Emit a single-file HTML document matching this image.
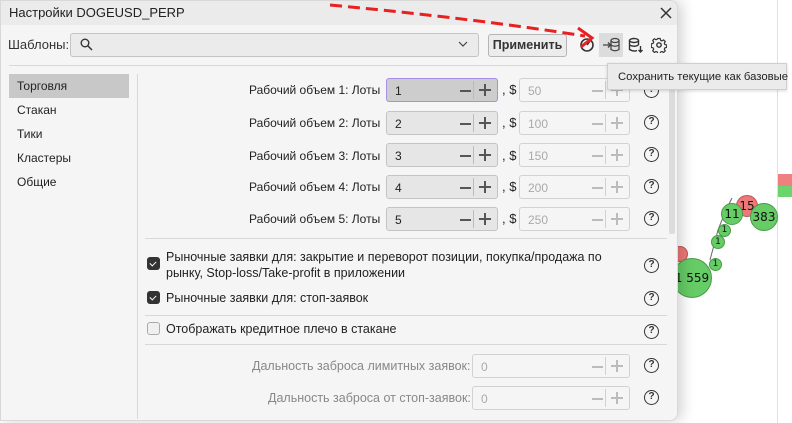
<!DOCTYPE html>
<html><head><meta charset="utf-8"><style>
*{box-sizing:border-box;margin:0;padding:0}
body{width:792px;height:423px;overflow:hidden;background:#fff;font-family:"Liberation Sans",Arial,sans-serif;font-size:12px;color:#222;position:relative}
.a{position:absolute}
#dlg{left:0;top:0;width:678px;height:421px;background:#f5f5f5;border:1px solid #d8d8d8;border-radius:0 8px 8px 0;box-shadow:4px 0 14px rgba(0,0,0,.18);overflow:hidden}
.title{left:0;top:0;width:678px;height:24px;background:#ebebeb}
.lbl{white-space:nowrap;line-height:14px}
.inp{border:1px solid #c4c4c4;border-radius:3px;height:24px;background:#e6e6e6}
.inp.dis{background:#f5f5f5;border-color:#d2d2d2;color:#aaa}
.inp .v{position:absolute;left:8px;top:5px;font-size:12px}
.inp .mi{position:absolute;right:26px;top:11px;width:11px;height:1.5px;background:#555}
.inp .sep{position:absolute;right:23px;top:2px;width:1px;height:18px;background:#bbb}
.inp .pl{position:absolute;right:6px;top:5px;width:12px;height:12px}
.inp .pl:before{content:"";position:absolute;left:0;top:5px;width:12px;height:1.5px;background:#555}
.inp .pl:after{content:"";position:absolute;left:5.25px;top:0;width:1.5px;height:12px;background:#555}
.dis .mi,.dis .pl:before,.dis .pl:after{background:#bbb}
.dis .sep{background:#d0d0d0}
.q{width:15px;height:15px;border:1.5px solid #333;border-radius:50%;font-size:10px;font-weight:bold;text-align:center;line-height:12px;color:#333}
.hr{height:1px;background:#d8d8d8}
.cb{width:13px;height:13px;border-radius:3px;background:#333}
.cb:after{content:"";position:absolute;left:4px;top:2.5px;width:3px;height:5px;border:solid #fff;border-width:0 1.3px 1.3px 0;transform:rotate(45deg)}
.b{border-radius:50%;border:1px solid #4a9a4a;background:#66cc66;text-align:center;font-family:"DejaVu Sans",sans-serif;color:#111}
.r{background:#ee7777;border-color:#b55}
.lot{font-size:12px}
</style></head><body>
<div class="a" style="left:777px;top:0;width:1px;height:423px;background:#e0e0e0"></div>
<div class="a" style="left:778px;top:174px;width:14px;height:12px;background:#f08080"></div>
<div class="a" style="left:778px;top:186px;width:14px;height:11px;background:#6cd46c"></div>
<svg class="a" style="left:670px;top:190px" width="110" height="110"><path d="M40 70 L48 40 L56 20 L62 8" stroke="#666" fill="none"/></svg>
<div class="a b r" style="left:672px;top:246px;width:16px;height:16px"></div>
<div class="a b r" style="left:736px;top:195px;width:22px;height:22px;font-size:12px;line-height:20px">15</div>
<div class="a b" style="left:721px;top:203px;width:22px;height:22px;font-size:12px;line-height:20px">11</div>
<div class="a b" style="left:750px;top:203px;width:28px;height:28px;font-size:12px;line-height:26px">383</div>
<div class="a b" style="left:718px;top:224px;width:13px;height:13px;font-size:9px;line-height:11px">1</div>
<div class="a b" style="left:711px;top:235px;width:14px;height:14px;font-size:9px;line-height:12px">1</div>
<div class="a b" style="left:709px;top:258px;width:13px;height:13px;font-size:9px;line-height:11px">1</div>
<div class="a b" style="left:672px;top:258px;width:40px;height:40px;font-size:12px;line-height:38px">1 559</div>

<div id="dlg" class="a">
<div class="a title"></div>
<div class="a lbl" style="left:8px;top:5px;font-size:13px;color:#222">Настройки DOGEUSD_PERP</div>
<svg class="a" style="left:659px;top:6px" width="12" height="12"><path d="M1 1L11 11M11 1L1 11" stroke="#333" stroke-width="1.5"/></svg>
<div class="a lbl" style="left:7px;top:37px;font-size:13px;color:#333">Шаблоны:</div>
<div class="a inp" style="left:69px;top:32px;width:409px;height:24px;background:#ebebeb"></div>
<svg class="a" style="left:79px;top:37px" width="13" height="13"><circle cx="5" cy="5" r="3.8" stroke="#333" stroke-width="1.4" fill="none"/><path d="M8 8L12 12" stroke="#333" stroke-width="1.5"/></svg>
<svg class="a" style="left:457px;top:40px" width="10" height="7"><path d="M1 1L5 5L9 1" stroke="#444" fill="none" stroke-width="1.2"/></svg>
<div class="a" style="left:487px;top:33px;width:79px;height:23px;border:1px solid #b5b5b5;border-radius:3px;background:#ececec;text-align:center;line-height:21px;font-size:12.5px;font-weight:bold;color:#333">Применить</div>
<svg class="a" style="left:578px;top:36px" width="16" height="16"><circle cx="8" cy="8" r="6" stroke="#333" stroke-width="1.6" fill="none"/><path d="M8 8L11 4" stroke="#333" stroke-width="1.6"/></svg>
<div class="a" style="left:598px;top:32px;width:24px;height:24px;background:#dcdcdc"></div>
<svg class="a" style="left:601px;top:36px" width="18" height="16"><path d="M1 8H8M6 5.5L8.5 8L6 10.5" stroke="#444" fill="none" stroke-width="1.3"/><ellipse cx="13" cy="3.5" rx="4" ry="2" stroke="#444" fill="none" stroke-width="1.3"/><path d="M9 3.5V12.5Q13 15 17 12.5V3.5M9 8Q13 10.5 17 8" stroke="#444" fill="none" stroke-width="1.3"/></svg>
<svg class="a" style="left:627px;top:36px" width="16" height="16"><ellipse cx="6" cy="3.5" rx="4.5" ry="2" stroke="#333" fill="none" stroke-width="1.4"/><path d="M1.5 3.5V12.5Q6 15 9 13.5M10.5 3.5V8M1.5 8Q6 10.5 10.5 8M12.5 9V15M10.5 13L12.5 15L14.5 13" stroke="#333" fill="none" stroke-width="1.4"/></svg>
<svg class="a" style="left:650px;top:36px" width="16" height="16"><circle cx="8" cy="8" r="2.2" stroke="#333" fill="none" stroke-width="1.4"/><path d="M6.8 1.5h2.4l.4 1.8 1.4.6 1.6-1 1.7 1.7-1 1.6.6 1.4 1.8.4v2.4l-1.8.4-.6 1.4 1 1.6-1.7 1.7-1.6-1-1.4.6-.4 1.8H6.8l-.4-1.8-1.4-.6-1.6 1-1.7-1.7 1-1.6-.6-1.4-1.8-.4V6.8l1.8-.4.6-1.4-1-1.6 1.7-1.7 1.6 1 1.4-.6z" stroke="#333" fill="none" stroke-width="1.2" stroke-linejoin="round"/></svg>
<div class="a hr" style="left:8px;top:64px;width:662px"></div>

<div class="a" style="left:8px;top:73px;width:120px;height:24px;background:#c8c8c8"></div>
<div class="a lbl" style="left:16px;top:78px">Торговля</div>
<div class="a lbl" style="left:16px;top:102px">Стакан</div>
<div class="a lbl" style="left:16px;top:126px">Тики</div>
<div class="a lbl" style="left:16px;top:150px">Кластеры</div>
<div class="a lbl" style="left:16px;top:174px">Общие</div>
<div class="a" style="left:136px;top:73px;width:1px;height:345px;background:#d8d8d8"></div>
<div class="a" style="left:668px;top:73px;width:6px;height:160px;background:#dcdcdc;border-radius:2px"></div>

<div class="a lbl lot" style="left:248px;top:82px">Рабочий объем 1: Лоты</div>
<div class="a inp" style="left:385px;top:77px;width:112px;border-color:#a98ee6;background:#cdcdcd"><span class="v">1</span><i class="mi"></i><i class="sep"></i><i class="pl"></i></div>
<div class="a lbl" style="left:501px;top:82px;font-size:13px">, $</div>
<div class="a inp dis" style="left:518px;top:77px;width:111px"><span class="v">50</span><i class="mi"></i><i class="sep"></i><i class="pl"></i></div>
<div class="a q" style="left:643px;top:82px">?</div>

<div class="a lbl lot" style="left:248px;top:115px">Рабочий объем 2: Лоты</div>
<div class="a inp" style="left:385px;top:110px;width:112px"><span class="v">2</span><i class="mi"></i><i class="sep"></i><i class="pl"></i></div>
<div class="a lbl" style="left:501px;top:115px;font-size:13px">, $</div>
<div class="a inp dis" style="left:518px;top:110px;width:111px"><span class="v">100</span><i class="mi"></i><i class="sep"></i><i class="pl"></i></div>
<div class="a q" style="left:643px;top:114px">?</div>

<div class="a lbl lot" style="left:248px;top:148px">Рабочий объем 3: Лоты</div>
<div class="a inp" style="left:385px;top:142px;width:112px"><span class="v">3</span><i class="mi"></i><i class="sep"></i><i class="pl"></i></div>
<div class="a lbl" style="left:501px;top:148px;font-size:13px">, $</div>
<div class="a inp dis" style="left:518px;top:142px;width:111px"><span class="v">150</span><i class="mi"></i><i class="sep"></i><i class="pl"></i></div>
<div class="a q" style="left:643px;top:146px">?</div>

<div class="a lbl lot" style="left:248px;top:179px">Рабочий объем 4: Лоты</div>
<div class="a inp" style="left:385px;top:174px;width:112px"><span class="v">4</span><i class="mi"></i><i class="sep"></i><i class="pl"></i></div>
<div class="a lbl" style="left:501px;top:179px;font-size:13px">, $</div>
<div class="a inp dis" style="left:518px;top:174px;width:111px"><span class="v">200</span><i class="mi"></i><i class="sep"></i><i class="pl"></i></div>
<div class="a q" style="left:643px;top:178px">?</div>

<div class="a lbl lot" style="left:248px;top:211px">Рабочий объем 5: Лоты</div>
<div class="a inp" style="left:385px;top:206px;width:112px"><span class="v">5</span><i class="mi"></i><i class="sep"></i><i class="pl"></i></div>
<div class="a lbl" style="left:501px;top:211px;font-size:13px">, $</div>
<div class="a inp dis" style="left:518px;top:206px;width:111px"><span class="v">250</span><i class="mi"></i><i class="sep"></i><i class="pl"></i></div>
<div class="a q" style="left:643px;top:210px">?</div>

<div class="a hr" style="left:144px;top:237px;width:522px"></div>
<div class="a cb" style="left:146px;top:256px"></div>
<div class="a lbl" style="left:165px;top:248px;font-size:12.5px;line-height:16px">Рыночные заявки для: закрытие и переворот позиции, покупка/продажа по<br>рынку, Stop-loss/Take-profit в приложении</div>
<div class="a q" style="left:643px;top:257px">?</div>
<div class="a cb" style="left:146px;top:290px"></div>
<div class="a lbl" style="left:165px;top:290px;font-size:12.5px">Рыночные заявки для: стоп-заявок</div>
<div class="a q" style="left:643px;top:290px">?</div>
<div class="a hr" style="left:144px;top:314px;width:522px"></div>
<div class="a" style="left:146px;top:321px;width:13px;height:13px;border:1px solid #aaa;border-radius:3px;background:#f0f0f0"></div>
<div class="a lbl" style="left:165px;top:321px;font-size:12.5px">Отображать кредитное плечо в стакане</div>
<div class="a q" style="left:643px;top:323px">?</div>
<div class="a hr" style="left:144px;top:343px;width:522px"></div>
<div class="a lbl" style="left:251px;top:358px;font-size:12.5px;color:#888">Дальность заброса лимитных заявок:</div>
<div class="a inp dis" style="left:471px;top:353px;width:158px"><span class="v">0</span><i class="mi"></i><i class="sep"></i><i class="pl"></i></div>
<div class="a q" style="left:643px;top:357px">?</div>
<div class="a lbl" style="left:267px;top:390px;font-size:12.5px;color:#888">Дальность заброса от стоп-заявок:</div>
<div class="a inp dis" style="left:471px;top:385px;width:158px"><span class="v">0</span><i class="mi"></i><i class="sep"></i><i class="pl"></i></div>
<div class="a q" style="left:643px;top:389px">?</div>
</div>

<div class="a" style="left:607px;top:63px;width:180px;height:27px;background:#ebebeb;border:1px solid #cfcfcf;box-shadow:0 1px 3px rgba(0,0,0,.15)"></div>
<div class="a lbl" style="left:618px;top:70px;font-size:11.3px;color:#222">Сохранить текущие как базовые</div>
<svg class="a" style="left:0;top:0" width="792" height="60"><path d="M330 5 Q470 18 585 36" stroke="#e82020" stroke-width="3" fill="none" stroke-dasharray="12 6"/><path d="M578 28L592 38L581 47" stroke="#e82020" stroke-width="3" fill="none"/></svg>
</body></html>
